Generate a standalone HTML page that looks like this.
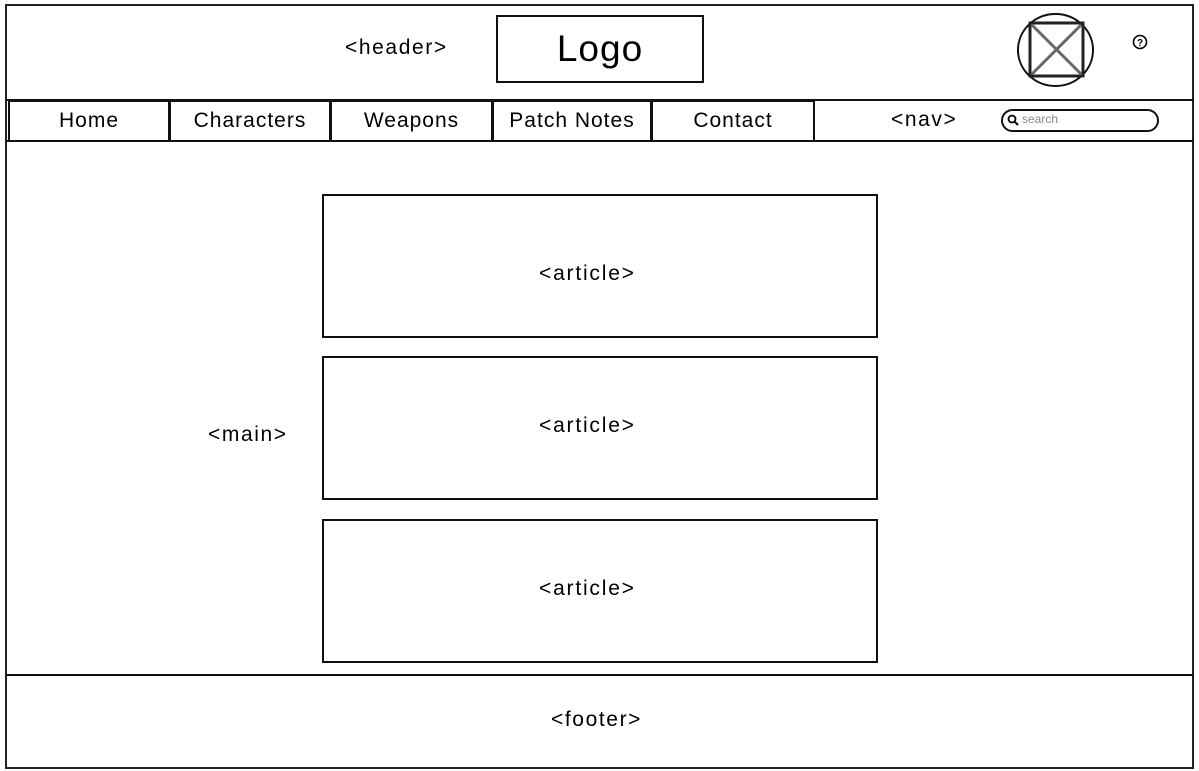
<!DOCTYPE html>
<html><head><style>
body{margin:0;width:1199px;height:771px;background:#fff;position:relative;font-family:"Liberation Sans",sans-serif;color:#000;overflow:hidden}
.a{position:absolute;box-sizing:border-box}
.b{border:2px solid #111}
.t{position:absolute;font-size:21px;white-space:nowrap;letter-spacing:1.6px}
.c{display:flex;align-items:center;justify-content:center;font-size:21px;letter-spacing:1px}
.ar{letter-spacing:1.8px}
</style></head><body>
<div class="a b" style="left:5px;top:4px;width:1189px;height:765px;border-color:#222"></div>
<div class="a" style="left:5px;top:99px;width:1189px;height:2px;background:#111"></div>
<div class="a" style="left:5px;top:140px;width:1189px;height:2px;background:#111"></div>
<div class="a" style="left:5px;top:674px;width:1189px;height:2px;background:#111"></div>
<div class="t" style="left:345px;top:36px">&lt;header&gt;</div>
<div class="a b c" style="left:496px;top:15px;width:208px;height:68px;font-size:37px;letter-spacing:1px">Logo</div>
<svg class="a" style="left:1016px;top:12px" width="79" height="76"><ellipse cx="39.5" cy="38" rx="37.5" ry="36" fill="none" stroke="#111" stroke-width="2"/><rect x="14" y="11" width="53" height="53" fill="none" stroke="#222" stroke-width="3"/><path d="M16 13L65 62M65 13L16 62" stroke="#666" stroke-width="3"/></svg>
<svg class="a" style="left:1132px;top:34px" width="16" height="16"><circle cx="8" cy="8" r="6.5" fill="none" stroke="#000" stroke-width="1.6"/><text x="8" y="12" font-size="10" font-weight="bold" text-anchor="middle" font-family="Liberation Sans">?</text></svg>
<div class="a b c" style="left:8px;top:100px;width:162px;height:42px">Home</div>
<div class="a b c" style="left:169px;top:100px;width:162px;height:42px">Characters</div>
<div class="a b c" style="left:330px;top:100px;width:163px;height:42px">Weapons</div>
<div class="a b c" style="left:492px;top:100px;width:160px;height:42px">Patch Notes</div>
<div class="a b c" style="left:651px;top:100px;width:164px;height:42px">Contact</div>
<div class="t" style="left:891px;top:108px">&lt;nav&gt;</div>
<div class="a b" style="left:1001px;top:109px;width:158px;height:23px;border-radius:12px"></div>
<svg class="a" style="left:1007px;top:114px" width="12" height="12"><circle cx="5" cy="5" r="3.5" fill="none" stroke="#000" stroke-width="1.8"/><path d="M7.5 7.5L11 11" stroke="#000" stroke-width="2"/></svg>
<div class="t" style="left:1022px;top:112px;font-size:12px;color:#888;letter-spacing:0">search</div>
<div class="t" style="left:208px;top:423px">&lt;main&gt;</div>
<div class="t ar" style="left:539px;top:262px">&lt;article&gt;</div>
<div class="t ar" style="left:539px;top:414px">&lt;article&gt;</div>
<div class="t ar" style="left:539px;top:577px">&lt;article&gt;</div>
<div class="a b" style="left:322px;top:194px;width:556px;height:144px"></div>
<div class="a b" style="left:322px;top:356px;width:556px;height:144px"></div>
<div class="a b" style="left:322px;top:519px;width:556px;height:144px"></div>
<div class="t" style="left:551px;top:708px">&lt;footer&gt;</div>
</body></html>
